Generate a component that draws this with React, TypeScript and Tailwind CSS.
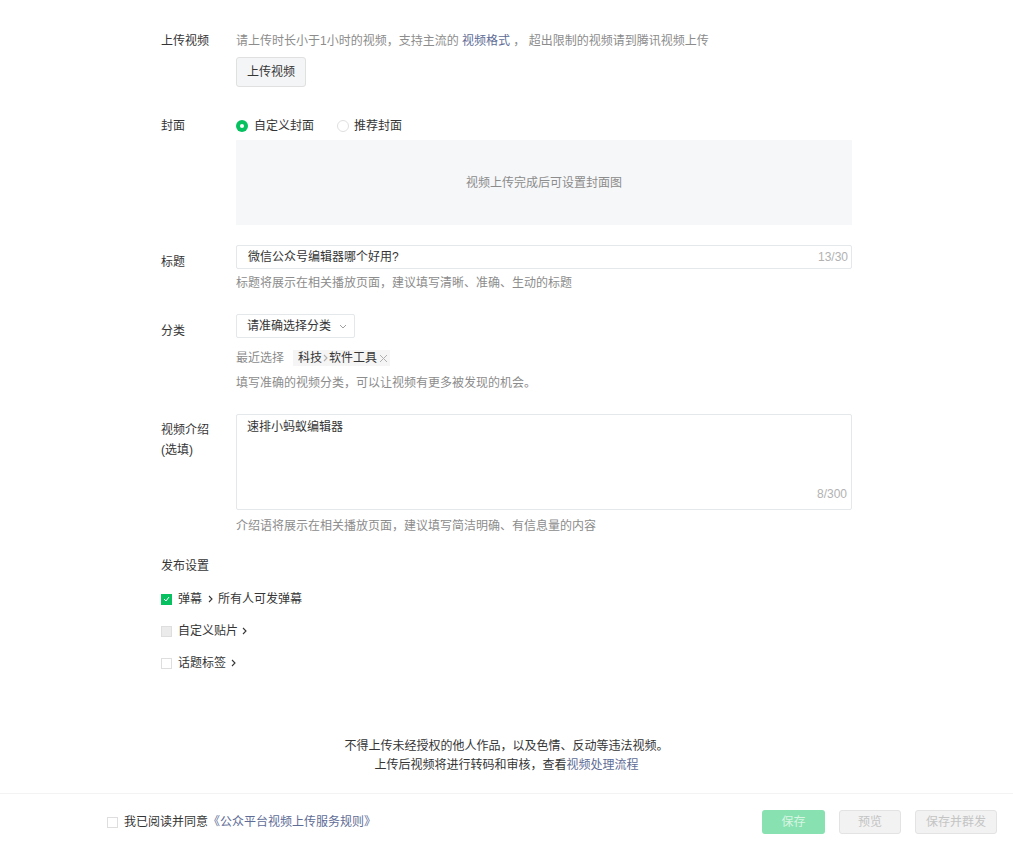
import React from "react";

const font = { fontFamily: '"Liberation Sans", "Noto Sans CJK SC", sans-serif' };

function Chevron({ className = "" }: { className?: string }) {
  return (
    <svg width="5" height="8" viewBox="0 0 5 8" className={className}>
      <path d="M1 1l3 3-3 3" fill="none" stroke="currentColor" strokeWidth="1.1" />
    </svg>
  );
}

function Row({ label, labelClass = "pt-0", children, className = "" }: { label: React.ReactNode; labelClass?: string; children: React.ReactNode; className?: string }) {
  return (
    <div className={`flex ${className}`}>
      <div className={`w-[75px] shrink-0 text-[12px] leading-4 text-[#353535] ${labelClass}`}>{label}</div>
      <div className="w-[616px]">{children}</div>
    </div>
  );
}

export default function App() {
  return (
    <div className="w-[1013px] h-[845px] bg-white text-[12px]" style={font}>
      <div className="pl-[161px] pt-[33px]">
        <Row label="上传视频">
          <div className="leading-4 text-[#8c8c8c]">
            请上传时长小于1小时的视频，支持主流的 <span className="text-[#5e6c96]">视频格式</span> ， 超出限制的视频请到腾讯视频上传
          </div>
          <button className="mt-2 h-[30px] w-[70px] rounded-[3px] border border-[#e0e0e0] bg-[#f4f5f7] text-[12px] text-[#353535]">
            上传视频
          </button>
        </Row>

        <Row label="封面" className="mt-[31px]">
          <div className="flex h-4 items-center leading-4 text-[#353535]">
            <span className="flex h-3 w-3 items-center justify-center rounded-full bg-[#07c160]">
              <span className="h-1 w-1 rounded-full bg-white" />
            </span>
            <span className="ml-[6px]">自定义封面</span>
            <span className="ml-[23px] h-3 w-3 rounded-full border border-[#e0e0e0] bg-white" />
            <span className="ml-[5px]">推荐封面</span>
          </div>
          <div className="mt-[6px] flex h-[85px] items-center justify-center bg-[#f6f7f9] text-[#8c8c8c]">
            视频上传完成后可设置封面图
          </div>
        </Row>

        <Row label="标题" labelClass="pt-[9px]" className="mt-[20px]">
          <div className="flex h-[24px] items-center justify-between rounded-[2px] border border-[#e4e8eb] pl-[11px] pr-[3px]">
            <span className="text-[#353535]">微信公众号编辑器哪个好用?</span>
            <span className="text-[#b2b2b2]">13/30</span>
          </div>
          <div className="mt-[6px] leading-4 text-[#8c8c8c]">标题将展示在相关播放页面，建议填写清晰、准确、生动的标题</div>
        </Row>

        <Row label="分类" labelClass="pt-[9px]" className="mt-[23px]">
          <div className="flex h-[24px] w-[119px] items-center justify-between rounded-[2px] border border-[#e4e8eb] pl-[10px] pr-[7px]">
            <span className="text-[#353535]">请准确选择分类</span>
            <svg width="8" height="5" viewBox="0 0 8 5">
              <path d="M1 1l3 3 3-3" fill="none" stroke="#a0a0a0" strokeWidth="1" />
            </svg>
          </div>
          <div className="mt-3 flex h-4 items-center leading-4">
            <span className="text-[#8c8c8c]">最近选择</span>
            <span className="ml-[9px] flex h-4 items-center bg-[#f5f5f5] pl-[5px] pr-[2px] text-[#353535]">
              科技
              <Chevron className="mx-[1px] text-[#b0b0b0]" />
              软件工具
              <span className="ml-[2px] text-[#b0b0b0]">
                <svg width="9" height="9" viewBox="0 0 9 9">
                  <path d="M1 1l7 7M8 1l-7 7" stroke="#b0b0b0" strokeWidth="1" />
                </svg>
              </span>
            </span>
          </div>
          <div className="mt-[9px] leading-4 text-[#8c8c8c]">填写准确的视频分类，可以让视频有更多被发现的机会。</div>
        </Row>

        <Row label={<div className="leading-5">视频介绍<br />(选填)</div>} labelClass="pt-[6px]" className="mt-[23px]">
          <div className="flex h-[96px] flex-col justify-between rounded-[2px] border border-[#e4e8eb] pb-[6px] pl-[10px] pr-[4px] pt-[4px]">
            <span className="leading-4 text-[#353535]">速排小蚂蚁编辑器</span>
            <span className="self-end text-[#b2b2b2]">8/300</span>
          </div>
          <div className="mt-2 leading-4 text-[#8c8c8c]">介绍语将展示在相关播放页面，建议填写简洁明确、有信息量的内容</div>
        </Row>

        <div className="mt-6 leading-4 text-[#353535]">发布设置</div>
        <div className="mt-[17px] flex h-4 items-center text-[#353535]">
          <span className="flex h-[11px] w-[11px] items-center justify-center bg-[#07c160]">
            <svg width="7" height="6" viewBox="0 0 7 6">
              <path d="M1 3l2 2 3-4" fill="none" stroke="#fff" strokeWidth="1" />
            </svg>
          </span>
          <span className="ml-[6px]">弹幕</span>
          <Chevron className="ml-[6px] text-[#353535]" />
          <span className="ml-[5px]">所有人可发弹幕</span>
        </div>
        <div className="mt-4 flex h-4 items-center text-[#353535]">
          <span className="h-[11px] w-[11px] border border-[#dedede] bg-[#ebebeb]" />
          <span className="ml-[6px]">自定义贴片</span>
          <Chevron className="ml-[4px] text-[#353535]" />
        </div>
        <div className="mt-4 flex h-4 items-center text-[#353535]">
          <span className="h-[11px] w-[11px] border border-[#dedede] bg-white" />
          <span className="ml-[6px]">话题标签</span>
          <Chevron className="ml-[5px] text-[#353535]" />
        </div>
      </div>

      <div className="mt-[66px] text-center leading-[19px] text-[#353535]">
        <div>不得上传未经授权的他人作品，以及色情、反动等违法视频。</div>
        <div>
          上传后视频将进行转码和审核，查看<span className="text-[#5e6c96]">视频处理流程</span>
        </div>
      </div>

      <div className="mt-[18px] border-t border-[#f3f3f3]" />

      <div className="mt-4 flex items-center justify-between pl-[107px] pr-[16px]">
        <div className="flex items-center text-[#353535]">
          <span className="h-[11px] w-[11px] border border-[#dedede] bg-white" />
          <span className="ml-[6px]">我已阅读并同意</span>
          <span className="text-[#5e6c96]">《公众平台视频上传服务规则》</span>
        </div>
        <div className="flex items-center">
          <button className="h-6 w-[63px] rounded-[3px] bg-[#87e1b0] text-[12px] text-[#d8f5e4]">保存</button>
          <button className="ml-[14px] h-6 w-[62px] rounded-[3px] border border-[#e3e3e3] bg-[#f2f2f2] text-[12px] text-[#c4c4c4]">预览</button>
          <button className="ml-[14px] h-6 w-[82px] rounded-[3px] border border-[#e3e3e3] bg-[#f2f2f2] text-[12px] text-[#c4c4c4]">保存并群发</button>
        </div>
      </div>
    </div>
  );
}
